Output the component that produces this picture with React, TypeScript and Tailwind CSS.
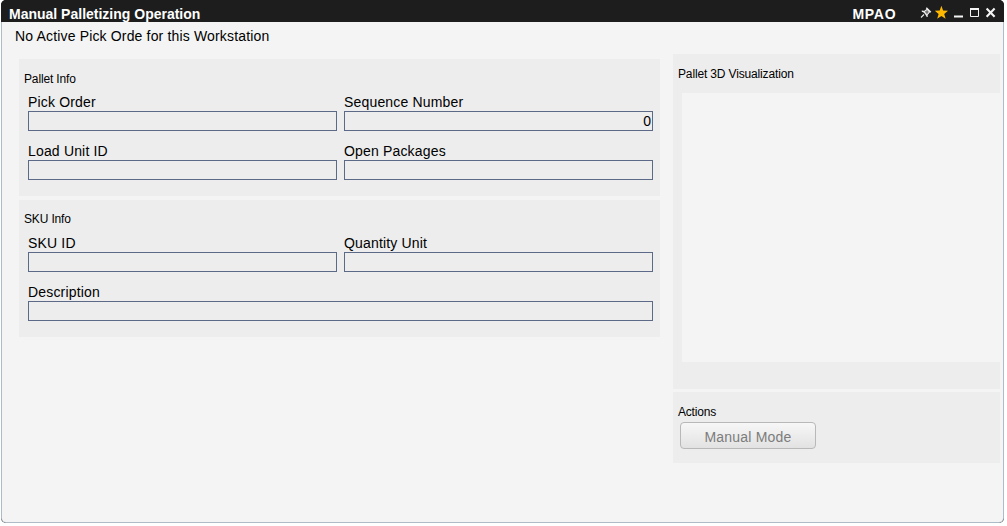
import type { ReactNode } from "react";

function Field({ label, value = "", className = "", labelClass = "tracking-[0.17px]" }: { label: string; value?: string; className?: string; labelClass?: string }) {
  return (
    <label className={`block ${className}`}>
      <span className={`block h-[18px] whitespace-nowrap text-[14px] leading-[18px] ${labelClass}`}>{label}</span>
      <input
        readOnly
        value={value}
        className="block h-5 w-full border border-[#5c6a88] bg-transparent pr-px text-right text-[14px] leading-[18px] outline-none"
      />
    </label>
  );
}

function Panel({ title, className = "", titleClass = "tracking-[-0.15px]", children }: { title: string; className?: string; titleClass?: string; children: ReactNode }) {
  return (
    <section className={`bg-[#ededed] ${className}`}>
      <h2 className={`h-4 pl-[5px] text-[12px] leading-4 ${titleClass}`}>{title}</h2>
      {children}
    </section>
  );
}

function WindowIcons() {
  return (
    <svg width="84" height="22" viewBox="-4 0 84 22" className="block" fill="none">
      <g stroke="#ececec" strokeWidth="1.1" transform="translate(-4 0)">
        <path d="M2 17.5 5 14.5" />
        <path d="M2.8 11.3Q5.8 11 8.4 16.8" strokeWidth="1.5" />
        <path d="M5 11.6 8.2 9.2 10.6 11.8 8 15Z" fill="#777" />
        <path d="M7.3 7.8 11.8 12.3" strokeWidth="1.4" />
      </g>
      <path d="M18.4 5.8 20.1 10.6 25 10.8 21.2 13.9 22.6 18.8 18.4 16 14.2 18.8 15.6 13.9 11.8 10.8 16.7 10.6Z" fill="#ffb800" />
      <path d="M31 16.5H40" stroke="#f4f4f4" strokeWidth="2" />
      <path d="M47.5 9V16.5H55.5V9" stroke="#f4f4f4" />
      <path d="M47 9H56" stroke="#f4f4f4" strokeWidth="2" />
      <path d="M63.6 8.6 71.6 16.8M71.6 8.6 63.6 16.8" stroke="#f4f4f4" strokeWidth="2.1" />
    </svg>
  );
}

export default function App() {
  return (
    <div className="h-[526px] w-[1007px] overflow-hidden bg-white pl-px font-['Liberation_Sans',Arial,sans-serif] text-black">
      <div className="flex h-[523px] w-[1003px] flex-col overflow-hidden rounded-[5px] bg-[#1d1d1d]">
        <header className="flex h-[22px] shrink-0 items-start bg-[#1d1d1d] pl-2 text-[14px] font-bold leading-[28px] text-white">
          <h1 className="w-[843px] whitespace-nowrap">Manual Palletizing Operation</h1>
          <span className="w-[67px] pl-[0.5px] tracking-[0.7px]">MPAO</span>
          <WindowIcons />
        </header>
        <main className="flex-1 rounded-b-[5px] border-x border-b border-[#afbcc7] bg-[#f4f4f4]">
          <p className="h-8 pl-[13px] pt-[5px] text-[14px] leading-[18px] tracking-[0.16px]">No Active Pick Orde for this Workstation</p>
          <div className="flex gap-[13px] pl-[17px]">
            <div className="flex w-[641px] flex-col gap-1 pt-[5px]">
              <Panel title="Pallet Info" className="h-[137px] pt-3">
                <div className="grid grid-cols-2 gap-x-[7px] gap-y-[11px] pl-[9px] pr-[7px] pt-[6px]">
                  <Field label="Pick Order" />
                  <Field label="Sequence Number" value="0" />
                  <Field label="Load Unit ID" />
                  <Field label="Open Packages" />
                </div>
              </Panel>
              <Panel title="SKU Info" className="h-[137px] pt-[11px]">
                <div className="grid grid-cols-2 gap-x-[7px] gap-y-[11px] pl-[9px] pr-[7px] pt-[7px]">
                  <Field label="SKU ID" />
                  <Field label="Quantity Unit" />
                  <Field label="Description" className="col-span-2" />
                </div>
              </Panel>
            </div>
            <div className="flex w-[327px] flex-col gap-[3px]">
              <Panel title="Pallet 3D Visualization" className="h-[335px] pt-3">
                <div className="ml-[9px] mt-[11px] h-[269px] bg-[#f4f4f4]" />
              </Panel>
              <Panel title="Actions" className="h-[71px] pt-3" titleClass="tracking-[-0.2px]">
                <button className="ml-[7px] mt-[2px] block h-[27px] w-[136px] rounded-[4px] border border-[#b8b8b8] bg-linear-to-b from-[#f7f7f7] to-[#e2e2e2] pt-[3px] text-[14px] leading-[22px] tracking-[0.2px] text-[#7c7c7c]">
                  Manual Mode
                </button>
              </Panel>
            </div>
          </div>
        </main>
      </div>
    </div>
  );
}
